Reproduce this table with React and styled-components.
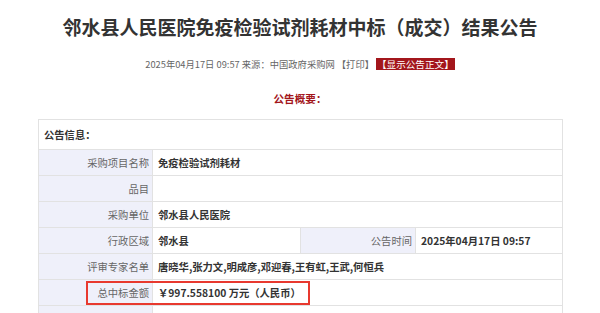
import React from "react";
import styled, { createGlobalStyle } from "styled-components";

const GlobalStyle = createGlobalStyle`
  html, body {
    margin: 0;
    padding: 0;
    background: #ffffff;
  }
  body {
    font-family: "Noto Sans CJK SC", "Noto Sans", "Liberation Sans", sans-serif;
    color: #333333;
  }
`;

const Page = styled.div`
  width: 600px;
  height: 313px;
  overflow: hidden;
  display: flex;
  flex-direction: column;
  align-items: center;
`;

const Title = styled.h1`
  margin: 15px 0 0;
  font-size: 19px;
  line-height: 24px;
  font-weight: 700;
  color: #333333;
  text-align: center;
`;

const Meta = styled.div`
  margin-top: 18px;
  font-size: 9.3px;
  line-height: 14px;
  color: #666666;
  display: flex;
  align-items: center;
  gap: 2px;
`;

const Badge = styled.span`
  background: #a3161c;
  color: #ffffff;
  padding: 0 1px;
  line-height: 12px;
  font-size: 9.6px;
`;

const Summary = styled.div`
  margin-top: 21px;
  font-size: 10.6px;
  line-height: 14px;
  font-weight: 700;
  color: #a3161c;
`;

const TableWrap = styled.div`
  position: relative;
  margin-top: 13px;
  width: 525px;
  margin-left: 1px;
`;

const Table = styled.table`
  width: 100%;
  border-collapse: collapse;
  table-layout: fixed;
  font-size: 10.3px;
`;

const Row = styled.tr`
  height: ${(p) => (p.$head ? "30px" : "26px")};
`;

const Cell = styled.td`
  border: 1px solid #e2e2e2;
  padding: 0 ${(p) => (p.$label ? "3px" : "5px")};
  text-align: ${(p) => (p.$label ? "right" : "left")};
  background: ${(p) => (p.$label ? "#eff0fa" : "#ffffff")};
  color: ${(p) => (p.$label ? "#666666" : "#333333")};
  font-weight: ${(p) => (p.$label ? 400 : 700)};
  white-space: nowrap;
  overflow: hidden;
`;

const Highlight = styled.div`
  position: absolute;
  left: 48px;
  top: 162px;
  width: 224px;
  height: 24px;
  box-sizing: border-box;
  border: 2px solid #e8392f;
  pointer-events: none;
`;

const rows = [
  { label: "采购项目名称", value: "免疫检验试剂耗材" },
  { label: "品目", value: "" },
  { label: "采购单位", value: "邻水县人民医院" },
  {
    label: "行政区域",
    value: "邻水县",
    label2: "公告时间",
    value2: "2025年04月17日 09:57",
  },
  { label: "评审专家名单", value: "唐晓华,张力文,明成彦,邓迎春,王有虹,王武,何恒兵" },
  { label: "总中标金额", value: "￥997.558100 万元（人民币）" },
  { label: "", value: "" },
];

export default function App() {
  return (
    <>
      <GlobalStyle />
      <Page>
        <Title>邻水县人民医院免疫检验试剂耗材中标（成交）结果公告</Title>
        <Meta>
          <span>2025年04月17日 09:57 来源：中国政府采购网</span>
          <span>【打印】</span>
          <Badge>【显示公告正文】</Badge>
        </Meta>
        <Summary>公告概要：</Summary>
        <TableWrap>
          <Table>
            <colgroup>
              <col style={{ width: "114px" }} />
              <col style={{ width: "148px" }} />
              <col style={{ width: "115px" }} />
              <col />
            </colgroup>
            <tbody>
              <Row $head>
                <Cell colSpan={4}>公告信息：</Cell>
              </Row>
              {rows.map((r, i) =>
                r.label2 ? (
                  <Row key={i}>
                    <Cell $label>{r.label}</Cell>
                    <Cell>{r.value}</Cell>
                    <Cell $label>{r.label2}</Cell>
                    <Cell>{r.value2}</Cell>
                  </Row>
                ) : (
                  <Row key={i}>
                    <Cell $label>{r.label}</Cell>
                    <Cell colSpan={3}>{r.value}</Cell>
                  </Row>
                )
              )}
            </tbody>
          </Table>
          <Highlight />
        </TableWrap>
      </Page>
    </>
  );
}
